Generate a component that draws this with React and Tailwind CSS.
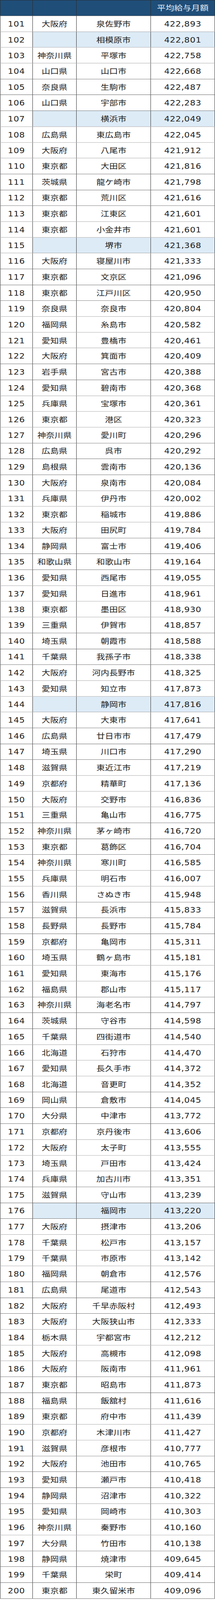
const DATA = `101,大阪府,泉佐野市,422893
102,,相模原市,422801
103,神奈川県,平塚市,422758
104,山口県,山口市,422668
105,奈良県,生駒市,422487
106,山口県,宇部市,422283
107,,横浜市,422049
108,広島県,東広島市,422045
109,大阪府,八尾市,421912
110,東京都,大田区,421816
111,茨城県,龍ケ崎市,421798
112,東京都,荒川区,421616
113,東京都,江東区,421601
114,東京都,小金井市,421601
115,,堺市,421368
116,大阪府,寝屋川市,421333
117,東京都,文京区,421096
118,東京都,江戸川区,420950
119,奈良県,奈良市,420804
120,福岡県,糸島市,420582
121,愛知県,豊橋市,420461
122,大阪府,箕面市,420409
123,岩手県,宮古市,420388
124,愛知県,碧南市,420368
125,兵庫県,宝塚市,420361
126,東京都,港区,420323
127,神奈川県,愛川町,420296
128,広島県,呉市,420292
129,島根県,雲南市,420136
130,大阪府,泉南市,420084
131,兵庫県,伊丹市,420002
132,東京都,稲城市,419886
133,大阪府,田尻町,419784
134,静岡県,富士市,419406
135,和歌山県,和歌山市,419164
136,愛知県,西尾市,419055
137,愛知県,日進市,418961
138,東京都,墨田区,418930
139,三重県,伊賀市,418857
140,埼玉県,朝霞市,418588
141,千葉県,我孫子市,418338
142,大阪府,河内長野市,418325
143,愛知県,知立市,417873
144,,静岡市,417816
145,大阪府,大東市,417641
146,広島県,廿日市市,417479
147,埼玉県,川口市,417290
148,滋賀県,東近江市,417219
149,京都府,精華町,417136
150,大阪府,交野市,416836
151,三重県,亀山市,416775
152,神奈川県,茅ヶ崎市,416720
153,東京都,葛飾区,416704
154,神奈川県,寒川町,416585
155,兵庫県,明石市,416007
156,香川県,さぬき市,415948
157,滋賀県,長浜市,415833
158,長野県,長野市,415784
159,京都府,亀岡市,415311
160,埼玉県,鶴ヶ島市,415181
161,愛知県,東海市,415176
162,福島県,郡山市,415117
163,神奈川県,海老名市,414797
164,茨城県,守谷市,414598
165,千葉県,四街道市,414540
166,北海道,石狩市,414470
167,愛知県,長久手市,414372
168,北海道,音更町,414352
169,岡山県,倉敷市,414045
170,大分県,中津市,413772
171,京都府,京丹後市,413606
172,大阪府,太子町,413555
173,埼玉県,戸田市,413424
174,兵庫県,加古川市,413351
175,滋賀県,守山市,413239
176,,福岡市,413220
177,大阪府,摂津市,413206
178,千葉県,松戸市,413157
179,千葉県,市原市,413142
180,福岡県,朝倉市,412576
181,広島県,尾道市,412543
182,大阪府,千早赤阪村,412493
183,大阪府,大阪狭山市,412333
184,栃木県,宇都宮市,412212
185,大阪府,高槻市,412098
186,大阪府,阪南市,411961
187,東京都,昭島市,411873
188,福島県,飯舘村,411616
189,東京都,府中市,411439
190,京都府,木津川市,411427
191,滋賀県,彦根市,410777
192,大阪府,池田市,410765
193,愛知県,瀬戸市,410418
194,静岡県,沼津市,410322
195,愛知県,岡崎市,410303
196,神奈川県,秦野市,410160
197,大分県,竹田市,410138
198,静岡県,焼津市,409645
199,千葉県,栄町,409414
200,東京都,東久留米市,409096`;

// rows where only the city is given (designated cities) get the light blue fill
const ROWS = DATA.split("\n").map((line) => {
  const [rank, pref, city, amount] = line.split(",");
  return { rank, pref, city, amount: Number(amount).toLocaleString("en-US"), cityOnly: pref === "" };
});

const FONT = { fontFamily: '"DejaVu Sans", "Noto Sans CJK JP", sans-serif' };

function Row({ row }) {
  const fill = row.cityOnly ? "bg-[#ddebf7]" : "bg-white";
  return (
    <div className="grid h-[47.7px] grid-cols-[84px_112px_190px_164px] border-b border-[#2b2b2b]">
      <div className="flex items-center justify-center border-l border-r border-[#2b2b2b] bg-white pt-[3px] tracking-[0.6px]">
        {row.rank}
      </div>
      <div className={`flex items-center justify-center border-r border-[#2b2b2b] pt-[3px] ${fill}`}>{row.pref}</div>
      <div className={`flex items-center justify-center border-r border-[#2b2b2b] pt-[3px] ${fill}`}>{row.city}</div>
      <div className={`flex items-center justify-center border-r border-[#2b2b2b] pt-[3px] tracking-[0.6px] ${fill}`}>
        {row.amount}
      </div>
    </div>
  );
}

export default function App() {
  return (
    <div className="h-[4821px] w-[550px] origin-top scale-y-[0.84962] bg-white text-[22px] leading-none text-[#222]" style={FONT}>
      <div className="grid h-[48px] grid-cols-[84px_112px_190px_164px] border-b border-t border-[#2b2b2b] bg-[#1f4e79] text-[#e8edf4]">
        <div className="border-l border-r border-[#2b2b2b]" />
        <div className="border-r border-[#2b2b2b]" />
        <div className="border-r border-[#2b2b2b]" />
        <div className="flex items-center justify-center border-r border-[#2b2b2b] pt-[2px]">平均給与月額</div>
      </div>
      {ROWS.map((row) => (
        <Row key={row.rank} row={row} />
      ))}
    </div>
  );
}
